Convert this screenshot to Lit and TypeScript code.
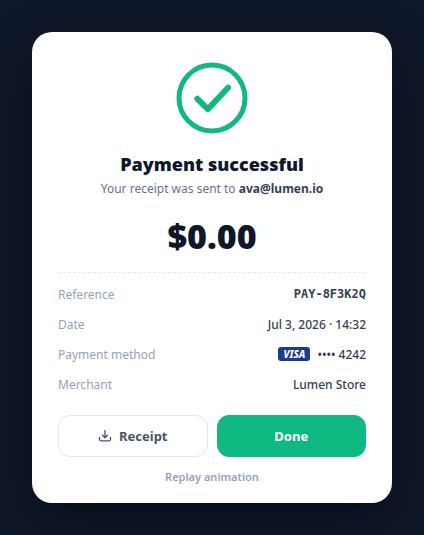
import { LitElement, html, css } from "lit";
import { customElement } from "lit/decorators.js";

@customElement("app-root")
export class AppRoot extends LitElement {
  static styles = css`
    :host {
      display: flex;
      align-items: flex-start;
      justify-content: center;
      box-sizing: border-box;
      min-height: 100vh;
      padding: 32px;
      background: #0f172a;
      color: #0f172a;
      font-family: "Noto Sans", "Open Sans", sans-serif;
    }
    .card {
      box-sizing: border-box;
      width: 100%;
      max-width: 360px;
      padding: 30px 26px 17px;
      border-radius: 20px;
      background: #fff;
      box-shadow: 0 20px 50px rgba(0, 0, 0, 0.4);
      text-align: center;
    }
    .check {
      display: block;
      width: 72px;
      height: 72px;
      margin: 0 auto 18px;
    }
    h1 {
      margin: 0;
      font-size: 18px;
      line-height: 24px;
      font-weight: 900;
    }
    .sent {
      margin: 3px 0 0;
      font-size: 12px;
      line-height: 20px;
      color: #64748b;
    }
    .sent strong {
      font-weight: 700;
      color: #334155;
    }
    .amount {
      margin: 13px 0 12px;
      font-size: 34px;
      line-height: 48px;
      font-weight: 900;
    }
    .details {
      margin: 0;
      padding-top: 6px;
      border-top: 1px dashed #e2e8f0;
      font-size: 12px;
    }
    .row {
      display: flex;
      align-items: center;
      justify-content: space-between;
      height: 30px;
    }
    dt {
      color: #94a3b8;
    }
    dd {
      display: flex;
      align-items: center;
      gap: 7px;
      margin: 0;
      font-weight: 500;
      color: #334155;
    }
    .mono {
      font-family: "DejaVu Sans Mono", monospace;
      font-size: 12px;
      font-weight: 600;
    }
    .visa {
      padding: 0 5px;
      border-radius: 3px;
      background: #1e3a8a;
      color: #fff;
      font-size: 10px;
      line-height: 14px;
      font-weight: 800;
      font-style: italic;
    }
    .actions {
      display: grid;
      grid-template-columns: 1fr 1fr;
      gap: 9px;
      margin-top: 16px;
    }
    button {
      font-family: inherit;
      cursor: pointer;
    }
    .btn {
      display: flex;
      align-items: center;
      justify-content: center;
      gap: 7px;
      height: 42px;
      padding: 0;
      border: 1px solid #e2e8f0;
      border-radius: 12px;
      background: #fff;
      color: #475569;
      font-size: 13px;
      font-weight: 700;
    }
    .primary {
      border-color: #10b981;
      background: #10b981;
      color: #fff;
    }
    .replay {
      margin-top: 12px;
      padding: 0;
      border: 0;
      background: none;
      color: #94a3b8;
      font-size: 11px;
      line-height: 16px;
      font-weight: 600;
    }
  `;

  private rows = [
    { label: "Reference", value: html`<span class="mono">PAY-8F3K2Q</span>` },
    { label: "Date", value: "Jul 3, 2026 · 14:32" },
    {
      label: "Payment method",
      value: html`<span class="visa">VISA</span><span>•••• 4242</span>`,
    },
    { label: "Merchant", value: "Lumen Store" },
  ];

  render() {
    return html`
      <main class="card">
        <svg class="check" viewBox="0 0 72 72" fill="none" stroke="#10b981" stroke-width="5" aria-hidden="true">
          <circle cx="36" cy="36" r="33" />
          <path d="M21.4 36.8 31.8 47.2 52 25.8" stroke-width="6" stroke-linecap="round" stroke-linejoin="round" />
        </svg>
        <h1>Payment successful</h1>
        <p class="sent">Your receipt was sent to <strong>ava@lumen.io</strong></p>
        <div class="amount">$0.00</div>
        <dl class="details">
          ${this.rows.map(
            (r) => html`<div class="row"><dt>${r.label}</dt><dd>${r.value}</dd></div>`
          )}
        </dl>
        <div class="actions">
          <button class="btn" type="button">
            <svg width="14" height="14" viewBox="0 0 14 14" fill="none" stroke="currentColor" stroke-width="1.3" stroke-linecap="round" stroke-linejoin="round" aria-hidden="true">
              <path d="M7 1.5V8.5M4.5 6.2 7 8.7 9.5 6.2M1.5 8.5V10.3Q1.5 11.8 3 11.8H11Q12.5 11.8 12.5 10.3V8.5" />
            </svg>
            Receipt
          </button>
          <button class="btn primary" type="button">Done</button>
        </div>
        <button class="replay" type="button">Replay animation</button>
      </main>
    `;
  }
}
